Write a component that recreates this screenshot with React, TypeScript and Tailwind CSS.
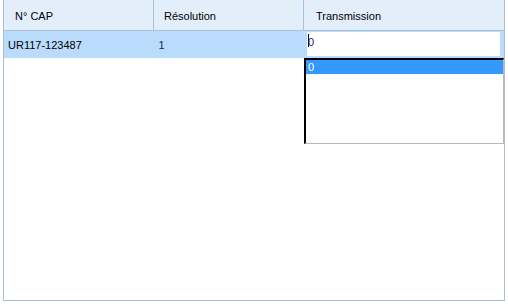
export default function App() {
  return (
    <div className="relative h-[306px] w-[508px] bg-white font-['Liberation_Sans',Tahoma,sans-serif] text-[11px] text-black">
      <div className="ml-[3px] flex h-[301px] w-[502px] flex-col border border-t-0 border-[#a8bdd0]">
        <div className="flex h-[31px] border-b border-[#a9c2dc] bg-[#e3eefb]">
          <div className="flex w-[150px] items-center border-r border-[#a9c2dc] pl-[11px] pt-[2px]">N° CAP</div>
          <div className="flex w-[150px] items-center border-r border-[#a9c2dc] pl-[10px] pt-[2px]">Résolution</div>
          <div className="flex flex-1 items-center pl-[12px] pt-[2px]">Transmission</div>
        </div>
        <div className="flex h-[27px] bg-[#b9dcfd]">
          <div className="flex w-[150px] items-center pl-[4px] pt-[1px]">UR117-123487</div>
          <div className="flex w-[150px] items-center pl-[5px] pt-[1px] text-[#1c1c5c]">1</div>
          <div className="flex flex-1 px-[4px] py-[1px]">
            <div className="flex h-[24px] w-[193px] items-start bg-white pl-[1px] pt-[2px]">
              <span className="h-[13px] w-px bg-black" />
              <span className="-ml-px text-[#202070]">0</span>
            </div>
          </div>
        </div>
        <div className="flex-1" />
      </div>
      <div className="absolute left-[304px] top-[58px] h-[86px] w-[200px] border-b border-l-2 border-r border-t-2 border-b-[#b8b8b8] border-l-black border-r-[#b8b8b8] border-t-black bg-white">
        <div className="flex h-[14px] items-center bg-[#3399ff] pl-[2px] text-white">0</div>
      </div>
    </div>
  );
}
